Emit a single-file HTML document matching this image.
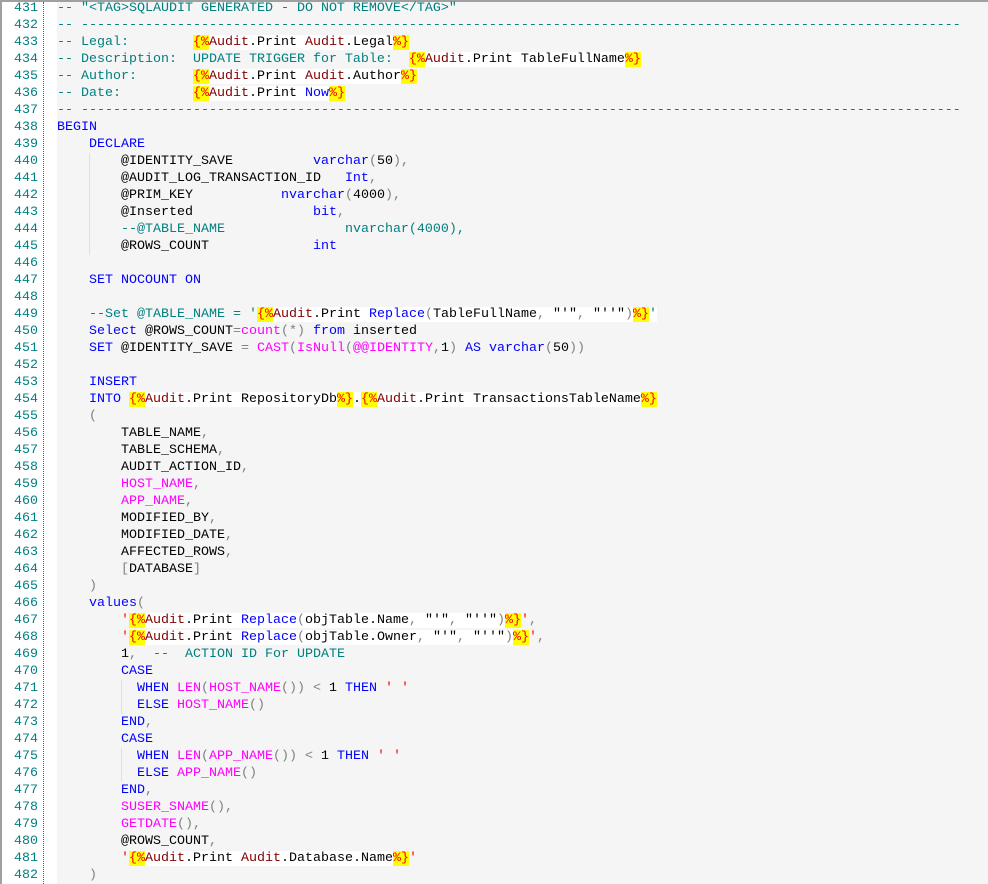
<!DOCTYPE html>
<html><head><meta charset="utf-8">
<style>
html,body{margin:0;padding:0;background:#fff;}
body{width:988px;height:884px;overflow:hidden;position:relative;font-family:"Liberation Mono","DejaVu Sans Mono",monospace;font-size:13.33px;}
#frame{position:absolute;left:0;top:0;width:988px;height:884px;border-top:2px solid #a0a0a0;border-left:2px solid #a0a0a0;box-sizing:border-box;}
#bg{position:absolute;left:57px;top:2px;right:0;bottom:0;background:#f5f5f5;}
#dots{position:absolute;left:43px;top:2px;bottom:0;border-left:1px dotted #008080;}
#nums{position:absolute;left:0;top:0;width:38px;text-align:right;color:#008080;}
#code{position:absolute;left:57px;top:0;color:#000;}
.l{height:17px;line-height:17px;white-space:pre;}
.c{color:#008080}.k{color:#0000ff}.f{color:#ff00ff}.s{color:#ff0000}.a{color:#800000}.p{color:#808080}
.t{background:#fff}.d{background:#ffff00;color:#ff0000}
.g{position:absolute;border-left:1px solid #e0e0e0;width:0;}
</style></head><body>
<div id="frame"></div>
<div id="bg"></div>
<div id="dots"></div>
<div class="g" style="left:89px;top:153px;height:102px"></div>
<div class="g" style="left:121px;top:680px;height:34px"></div>
<div class="g" style="left:121px;top:748px;height:34px"></div>
<div id="nums"><div class="l">431</div><div class="l">432</div><div class="l">433</div><div class="l">434</div><div class="l">435</div><div class="l">436</div><div class="l">437</div><div class="l">438</div><div class="l">439</div><div class="l">440</div><div class="l">441</div><div class="l">442</div><div class="l">443</div><div class="l">444</div><div class="l">445</div><div class="l">446</div><div class="l">447</div><div class="l">448</div><div class="l">449</div><div class="l">450</div><div class="l">451</div><div class="l">452</div><div class="l">453</div><div class="l">454</div><div class="l">455</div><div class="l">456</div><div class="l">457</div><div class="l">458</div><div class="l">459</div><div class="l">460</div><div class="l">461</div><div class="l">462</div><div class="l">463</div><div class="l">464</div><div class="l">465</div><div class="l">466</div><div class="l">467</div><div class="l">468</div><div class="l">469</div><div class="l">470</div><div class="l">471</div><div class="l">472</div><div class="l">473</div><div class="l">474</div><div class="l">475</div><div class="l">476</div><div class="l">477</div><div class="l">478</div><div class="l">479</div><div class="l">480</div><div class="l">481</div><div class="l">482</div></div>
<div id="code">
<div class="l c">-- "&lt;TAG&gt;SQLAUDIT GENERATED - DO NOT REMOVE&lt;/TAG&gt;"</div>
<div class="l c">-- --------------------------------------------------------------------------------------------------------------</div>
<div class="l"><span class="c">-- Legal:        </span><span class="t"><span class="d">{%</span><span class="a">Audit</span>.Print <span class="a">Audit</span>.Legal<span class="d">%}</span></span></div>
<div class="l"><span class="c">-- Description:  UPDATE TRIGGER for Table:  </span><span class="t"><span class="d">{%</span><span class="a">Audit</span>.Print TableFullName<span class="d">%}</span></span></div>
<div class="l"><span class="c">-- Author:       </span><span class="t"><span class="d">{%</span><span class="a">Audit</span>.Print <span class="a">Audit</span>.Author<span class="d">%}</span></span></div>
<div class="l"><span class="c">-- Date:         </span><span class="t"><span class="d">{%</span><span class="a">Audit</span>.Print <span class="k">Now</span><span class="d">%}</span></span></div>
<div class="l c">-- --------------------------------------------------------------------------------------------------------------</div>
<div class="l k">BEGIN</div>
<div class="l">    <span class="k">DECLARE</span></div>
<div class="l">        @IDENTITY_SAVE          <span class="k">varchar</span><span class="p">(</span>50<span class="p">),</span></div>
<div class="l">        @AUDIT_LOG_TRANSACTION_ID   <span class="k">Int</span><span class="p">,</span></div>
<div class="l">        @PRIM_KEY           <span class="k">nvarchar</span><span class="p">(</span>4000<span class="p">),</span></div>
<div class="l">        @Inserted               <span class="k">bit</span><span class="p">,</span></div>
<div class="l">        <span class="c">--@TABLE_NAME               nvarchar(4000),</span></div>
<div class="l">        @ROWS_COUNT             <span class="k">int</span></div>
<div class="l"> </div>
<div class="l">    <span class="k">SET NOCOUNT ON</span></div>
<div class="l"> </div>
<div class="l">    <span class="c">--Set @TABLE_NAME = '</span><span class="t"><span class="d">{%</span><span class="a">Audit</span>.Print <span class="k">Replace</span><span class="p">(</span>TableFullName<span class="p">,</span> "'"<span class="p">,</span> "''"<span class="p">)</span><span class="d">%}</span><span class="c">'</span></span></div>
<div class="l">    <span class="k">Select</span> @ROWS_COUNT<span class="p">=</span><span class="f">count</span><span class="p">(*)</span> <span class="k">from</span> inserted</div>
<div class="l">    <span class="k">SET</span> @IDENTITY_SAVE <span class="p">=</span> <span class="f">CAST</span><span class="p">(</span><span class="f">IsNull</span><span class="p">(</span><span class="f">@@IDENTITY</span><span class="p">,</span>1<span class="p">)</span> <span class="k">AS</span> <span class="k">varchar</span><span class="p">(</span>50<span class="p">))</span></div>
<div class="l"> </div>
<div class="l">    <span class="k">INSERT</span></div>
<div class="l">    <span class="k">INTO</span> <span class="t"><span class="d">{%</span><span class="a">Audit</span>.Print RepositoryDb<span class="d">%}</span>.<span class="d">{%</span><span class="a">Audit</span>.Print TransactionsTableName<span class="d">%}</span></span></div>
<div class="l">    <span class="p">(</span></div>
<div class="l">        TABLE_NAME<span class="p">,</span></div>
<div class="l">        TABLE_SCHEMA<span class="p">,</span></div>
<div class="l">        AUDIT_ACTION_ID<span class="p">,</span></div>
<div class="l">        <span class="f">HOST_NAME</span><span class="p">,</span></div>
<div class="l">        <span class="f">APP_NAME</span><span class="p">,</span></div>
<div class="l">        MODIFIED_BY<span class="p">,</span></div>
<div class="l">        MODIFIED_DATE<span class="p">,</span></div>
<div class="l">        AFFECTED_ROWS<span class="p">,</span></div>
<div class="l">        <span class="p">[</span>DATABASE<span class="p">]</span></div>
<div class="l">    <span class="p">)</span></div>
<div class="l">    <span class="k">values</span><span class="p">(</span></div>
<div class="l">        <span class="s">'</span><span class="t"><span class="d">{%</span><span class="a">Audit</span>.Print <span class="k">Replace</span><span class="p">(</span>objTable.Name<span class="p">,</span> "'"<span class="p">,</span> "''"<span class="p">)</span><span class="d">%}</span></span><span class="s">'</span><span class="p">,</span></div>
<div class="l">        <span class="s">'</span><span class="t"><span class="d">{%</span><span class="a">Audit</span>.Print <span class="k">Replace</span><span class="p">(</span>objTable.Owner<span class="p">,</span> "'"<span class="p">,</span> "''"<span class="p">)</span><span class="d">%}</span></span><span class="s">'</span><span class="p">,</span></div>
<div class="l">        1<span class="p">,</span>  <span class="c">--  ACTION ID For UPDATE</span></div>
<div class="l">        <span class="k">CASE</span></div>
<div class="l">          <span class="k">WHEN</span> <span class="f">LEN</span><span class="p">(</span><span class="f">HOST_NAME</span><span class="p">())</span> <span class="p">&lt;</span> 1 <span class="k">THEN</span> <span class="s">' '</span></div>
<div class="l">          <span class="k">ELSE</span> <span class="f">HOST_NAME</span><span class="p">()</span></div>
<div class="l">        <span class="k">END</span><span class="p">,</span></div>
<div class="l">        <span class="k">CASE</span></div>
<div class="l">          <span class="k">WHEN</span> <span class="f">LEN</span><span class="p">(</span><span class="f">APP_NAME</span><span class="p">())</span> <span class="p">&lt;</span> 1 <span class="k">THEN</span> <span class="s">' '</span></div>
<div class="l">          <span class="k">ELSE</span> <span class="f">APP_NAME</span><span class="p">()</span></div>
<div class="l">        <span class="k">END</span><span class="p">,</span></div>
<div class="l">        <span class="f">SUSER_SNAME</span><span class="p">(),</span></div>
<div class="l">        <span class="f">GETDATE</span><span class="p">(),</span></div>
<div class="l">        @ROWS_COUNT<span class="p">,</span></div>
<div class="l">        <span class="s">'</span><span class="t"><span class="d">{%</span><span class="a">Audit</span>.Print <span class="a">Audit</span>.Database.Name<span class="d">%}</span></span><span class="s">'</span></div>
<div class="l">    <span class="p">)</span></div>
</div>
</body></html>
